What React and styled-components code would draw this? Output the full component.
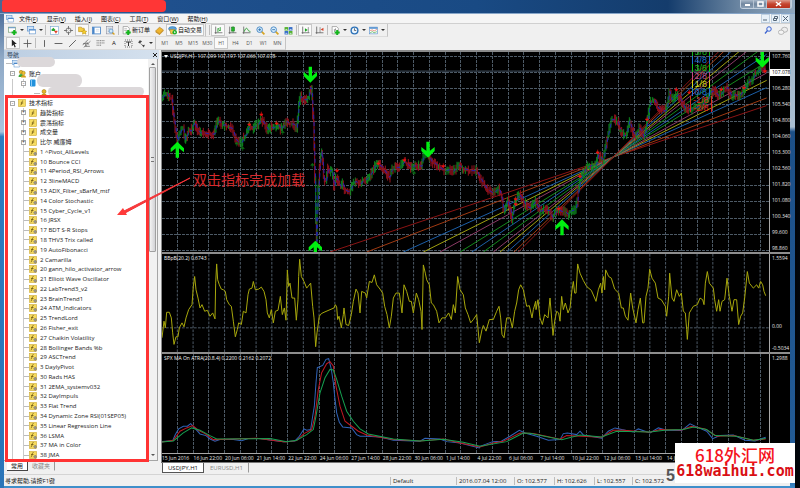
import React, { useState } from 'react';
import styled, { createGlobalStyle } from 'styled-components';

const GlobalStyle = createGlobalStyle`
  * { box-sizing: border-box; }
  html, body { margin: 0; padding: 0; background: #000; }
  body, button {
    font-family: "Open Sans", "Noto Sans CJK SC", sans-serif;
    font-size: 6px;
    line-height: 8px;
    color: #1a1a1a;
  }
  button { border: 0; padding: 0; margin: 0; background: none; }
  ul { list-style: none; margin: 0; padding: 0; }
`;

const Desktop = styled.div`
  height: 100vh;
  min-height: 440px;
  padding-right: 5px;
  background: linear-gradient(90deg, #000 98%, #02060c);
  overflow: hidden;
`;

const Window = styled.div`
  position: relative;
  height: 100%;
  display: grid;
  grid-template-rows: 14px auto 1fr auto;
  padding: 0 5px 2px 4px;
  background:
    linear-gradient(180deg, #9fb6cc, #a9bed3 26%, #1c4f88 27%, #235c98 97%, #3c8bc9) right / 5px 100% no-repeat,
    linear-gradient(180deg, #3b5f8f, #8fa9c6 12%, #a9c4de 27%, #2f7cc0 28%, #2b75b8) left / 4px 100% no-repeat,
    #3f8fca;
`;

const TitleBar = styled.header`
  position: relative;
  display: flex;
  justify-content: flex-end;
  margin: 0 -5px 0 -4px;
  background: linear-gradient(90deg, #4d6794, #1f508d 21%, #194a84 60%, #143c6c 84%, #6b86a2 93%, #90a7be);
  border-bottom: 1px solid #86a5c8;
`;

const TitleMask = styled.div`
  position: absolute;
  left: 2px;
  top: 0;
  width: 164px;
  height: 12px;
  border-radius: 2px 4px 4px 2px;
  background: #ff3636;
`;

const CaptionButtons = styled.div`
  display: flex;
  height: 9px;
  margin-right: 3px;
  border: 1px solid #c2cfdd;
  border-top: 0;
  border-radius: 0 0 3px 3px;
  overflow: hidden;
`;

const CaptionButton = styled.button`
  display: flex;
  align-items: center;
  justify-content: center;
  width: ${props => (props.$close ? '24px' : '13px')};
  border-right: 1px solid #b5c3d2;
  background: ${props => (props.$close
    ? 'linear-gradient(#dd9a8c, #c5452f 50%, #b8301c)'
    : 'linear-gradient(#a9b9ca, #71879f 50%, #8ba0b6)')};
`;

const Chrome = styled.div`
  background: #f0f0f0;
`;

const MenuBar = styled.nav`
  display: flex;
  align-items: center;
  height: 10px;
  padding-left: 2px;
  border-bottom: 1px solid #d0d0d0;
  background: #f5f5f5;
`;

const MenuItem = styled.button`
  margin-left: 1px;
  padding: 0 4px;
  white-space: nowrap;
  color: #111;
  u { text-underline-offset: 1px; }
`;

const MdiButtons = styled.div`
  display: flex;
  gap: 1px;
  margin-left: auto;
`;

const MdiButton = styled.button`
  display: flex;
  align-items: center;
  justify-content: center;
  width: 9px;
  height: 9px;
  border: 1px solid #bfd0e0;
  background: #e8f1f9;
`;

const ToolRow = styled.div`
  display: flex;
  align-items: center;
  height: 13px;
`;

const ToolGroup = styled.div`
  display: flex;
  align-items: center;
  height: 13px;
  padding: 0 1px 0 2px;
  border-right: 1px solid #c4c4c4;
  border-bottom: 1px solid #dcdcdc;
`;

const Tool = styled.button`
  display: flex;
  align-items: center;
  justify-content: center;
  gap: 1px;
  min-width: ${props => (props.$menu ? '19px' : '14px')};
  height: 12px;
  padding: 0 ${props => (props.$menu ? '0' : '1px')};
  white-space: nowrap;
  color: ${props => (props.$muted ? '#555' : '#111')};
  font-size: ${props => (props.$muted ? '5px' : '6px')};
  border: 1px solid ${props => (props.$pressed ? '#c8c8c8' : 'transparent')};
  background: ${props => (props.$pressed ? '#fafafa' : 'transparent')};
`;

const Sep = styled.span`
  width: 1px;
  height: 10px;
  margin: 0 1px;
  background: #bdbdbd;
`;

const Caret = styled.span`
  width: 0;
  height: 0;
  margin-left: 2px;
  border: 2px solid transparent;
  border-top-color: #333;
  border-bottom: 0;
`;

const ToolEnd = styled.div`
  display: flex;
  gap: 6px;
  margin-left: auto;
  padding-right: 2px;
`;

const Workspace = styled.main`
  position: relative;
  display: flex;
  min-height: 0;
  background: #f0f0f0;
`;

const NavPanel = styled.aside`
  position: relative;
  display: flex;
  flex-direction: column;
  flex: 0 0 155px;
  min-height: 0;
`;

const NavHeader = styled.div`
  display: flex;
  align-items: center;
  justify-content: space-between;
  height: 9px;
  padding: 0 2px 0 3px;
  background: linear-gradient(90deg, #bccee2, #d5e1ee);
  color: #2d4056;
`;

const NavBody = styled.div`
  display: flex;
  flex: 1;
  min-height: 0;
  margin-right: 1px;
  background: #fff;
  border: solid #a5a5a5;
  border-width: 0 1px 1px 0;
`;

const Tree = styled.ul`
  display: flex;
  flex-direction: column;
  flex: 1;
  min-width: 0;
  overflow: hidden;
`;

const TreeRow = styled.li`
  position: relative;
  display: flex;
  flex: 1 1 0;
  align-items: center;
  min-height: 0;
  padding-left: ${props => [0, 6, 17, 28][props.$level]}px;
  white-space: nowrap;

  &::before {
    content: "";
    position: absolute;
    top: 0;
    bottom: 0;
    left: 8px;
    border-left: ${props => (props.$level > 1 ? '1px solid #c9c9c9' : '0')};
  }

  &::after {
    content: "";
    position: absolute;
    top: 0;
    bottom: 0;
    left: 19px;
    border-left: ${props => (props.$level === 2 ? '1px solid #c9c9c9' : '0')};
  }
`;

const Branch = styled.span`
  width: 6px;
  height: 1px;
  margin-left: 2px;
  background: #bbb;
`;

const Toggle = styled.button`
  position: relative;
  z-index: 1;
  display: flex;
  align-items: center;
  justify-content: center;
  width: 5px;
  height: 5px;
  margin-right: 3px;
  border: 1px solid #a8a8a8;
  background: #fff;
  font-size: 5px;
  line-height: 3px;
  color: #333;
`;

const TreeLabel = styled.span`
  margin-left: 3px;
  color: #222;
`;

const Smudge = styled.div`
  position: absolute;
  left: ${props => props.$x}px;
  top: ${props => props.$y}px;
  width: ${props => props.$w}px;
  height: ${props => props.$h}px;
  border-radius: 6px;
  background: #dcd8da;
`;

const ScrollBar = styled.div`
  display: flex;
  flex-direction: column;
  align-items: center;
  justify-content: space-between;
  width: 9px;
  padding: 2px 0;
  background: #f1f1f1;
`;

const ScrollArrow = styled.button`
  width: 4px;
  height: 4px;
  border: 2px solid transparent;
  border-${props => (props.$up ? 'bottom' : 'top')}-color: #555;
`;

const ScrollTrack = styled.div`
  flex: 1;
  width: 7px;
  padding: 2px 0;
`;

const ScrollThumb = styled.div`
  display: flex;
  align-items: center;
  justify-content: center;
  height: 48%;
  border: 1px solid #a0a0a0;
  border-radius: 1px;
  background: linear-gradient(90deg, #f2f2f2, #d2d2d5);
  &::after {
    content: "";
    width: 3px;
    height: 3px;
    border: solid #777;
    border-width: 1px 0;
  }
`;

const NavTabs = styled.div`
  display: flex;
  align-items: stretch;
  height: 13px;
  padding: 0 0 3px 3px;
`;

const NavTab = styled.button`
  padding: 0 4px;
  color: ${props => (props.$active ? '#111' : '#888')};
  background: ${props => (props.$active ? '#fff' : 'transparent')};
  border-right: 1px solid ${props => (props.$active ? '#444' : '#999')};
  border-bottom: 1px solid ${props => (props.$active ? '#444' : 'transparent')};
`;

const Highlight = styled.div`
  position: absolute;
  left: 1px;
  top: 45px;
  bottom: 12px;
  width: 144px;
  border: 3px solid #ff3333;
`;

const ChartColumn = styled.section`
  display: flex;
  flex-direction: column;
  flex: 1;
  min-width: 0;
  padding-left: 2px;
`;

const ChartWindow = styled.div`
  flex: 1;
  min-height: 0;
  display: grid;
  grid-template-rows: 200fr 100fr 101fr 9px;
  border: solid #8a8a8a;
  border-width: 2px 0 0 1px;
  background: #000;
`;

const Pane = styled.div`
  display: grid;
  grid-template-columns: 1fr 21px;
  min-height: 0;
  border-top: ${props => (props.$first ? '0' : '2px solid #8e8e8e')};
`;

const Plot = styled.div`
  position: relative;
  min-width: 0;
  min-height: 0;
  overflow: hidden;
`;

const PlotSvg = styled.svg`
  display: block;
  position: absolute;
  inset: 0;
  width: 100%;
  height: 100%;
`;

const PlotTitle = styled.div`
  position: absolute;
  top: 1px;
  left: 2px;
  display: flex;
  align-items: center;
  gap: 2px;
  font: 5px/7px "Open Sans", sans-serif;
  color: #f4f4f4;
  white-space: pre;
`;

const TitleCaret = styled.span`
  border: 2px solid transparent;
  border-top: 3px solid #fff;
  border-bottom: 0;
`;

const LevelStack = styled.div`
  position: absolute;
  top: -4px;
  left: 87%;
  display: flex;
  flex-direction: column;
  align-items: center;
`;

const Level = styled.span`
  padding: 0 2px;
  border: solid ${props => props.$color};
  border-width: 0 1px;
  color: ${props => props.$color};
  font: 9px/8px "Liberation Sans", sans-serif;
`;

const Axis = styled.div`
  display: flex;
  flex-direction: column;
  justify-content: space-between;
  padding: 1px 0 0;
  border-left: 1px solid #a8a8a8;
  min-height: 0;
`;

const AxisLabel = styled.span`
  display: block;
  padding-left: 2px;
  font: 5px/7px "Open Sans", sans-serif;
  color: ${props => (props.$current ? '#000' : '#e6e6e6')};
  background: ${props => (props.$current ? '#fff' : 'transparent')};
`;

const AxisGap = styled.span`
  flex: ${props => props.$grow};
`;

const TimeAxis = styled.div`
  display: flex;
  margin-right: 20px;
  overflow: hidden;
  border-top: 1px solid #a8a8a8;
`;

const TimeLabel = styled.span`
  flex: 0 0 calc(100% * 63 / 1214);
  font: 5px/8px "Open Sans", sans-serif;
  white-space: nowrap;
  color: #e6e6e6;
`;

const ChartTabs = styled.div`
  display: flex;
  align-items: flex-start;
  height: 12px;
  padding-left: 1px;
  border-top: 1px solid #777;
`;

const ChartTab = styled.button`
  height: 10px;
  padding: 0 5px;
  border: solid ${props => (props.$active ? '#555' : 'transparent')};
  border-width: 0 1px 1px;
  border-right-color: ${props => (props.$active ? '#555' : '#999')};
  color: ${props => (props.$active ? '#111' : '#888')};
  background: ${props => (props.$active ? '#fff' : 'transparent')};
`;

const PointerSvg = styled.svg`
  position: absolute;
  left: 112px;
  top: 125px;
  width: 76px;
  height: 44px;
`;

const Note = styled.div`
  position: absolute;
  left: 189px;
  top: 119px;
  font: 14px/20px "Noto Sans CJK SC", sans-serif;
  color: #d82a2c;
  white-space: nowrap;
`;

const StatusBar = styled.footer`
  display: flex;
  align-items: center;
  height: 12px;
  padding-left: 1px;
  border-top: 1px solid #d4d4d4;
  background: #f0f0f0;
`;

const StatusHelp = styled.span`
  flex: 1;
`;

const StatusCell = styled.span`
  flex: 0 0 ${props => props.$width}px;
  padding-left: 2px;
  border-left: 1px solid #bdbdbd;
  white-space: nowrap;
`;

const Watermark = styled.div`
  position: absolute;
  right: 0;
  bottom: 5px;
  display: flex;
  flex-direction: column;
  align-items: center;
  justify-content: center;
  width: 120px;
  height: 40px;
  background: #fff;
  overflow: hidden;
`;

const WatermarkName = styled.span`
  font: 500 17px/17px "Noto Sans CJK SC", sans-serif;
  color: #f5121c;
`;

const WatermarkLink = styled.a`
  font: 700 15px/17px "DejaVu Sans Mono", monospace;
  color: #d90f14;
  text-decoration: none;
`;

const PageNumber = styled.span`
  position: absolute;
  right: 120px;
  bottom: 3px;
  font: 700 16px/18px "Liberation Sans", sans-serif;
  color: #555;
`;

// plots are drawn at three units per pixel
const GRID_X = Array.from({ length: 38 }, (_, i) => 52 + i * 47.25);
const GRID_Y = Array.from({ length: 13 }, (_, i) => 25 + i * 48.5);

const parse = str => str.trim().split(/\s+/).map(p => p.split(',').map(Number));

const PRICE = parse(`
  8,150 16,140 22,135 30,150 38,155 42,200 48,240 54,280 60,260 66,245 72,240 77,275 82,265 88,245 94,250
  100,235 106,222 112,240 118,250 124,255 136,255 148,258 165,258 172,225 180,220 188,232 196,230 206,238
  216,240 222,250 228,272 234,280 240,285 248,282 254,265 260,262 266,240 272,235 280,240 288,232 296,230
  304,215 312,222 318,232 326,245 334,238 342,240 350,235 358,232 364,245 372,235 382,220 390,228 402,228
  412,240 416,200 418,165 424,145 430,155 440,155 448,150 452,118 456,125 458,150 462,220 464,300 467,400
  469,520 471,580 474,480 478,400 482,340 487,310 490,345 494,400 500,400 506,360 512,370 518,365 524,415
  530,390 536,400 544,415 550,405 556,425 564,430 572,430 580,410 588,400 596,405 604,408 612,395 620,395
  630,385 638,372 646,355 658,350 670,358 680,375 690,388 696,368 706,358 720,358 728,350 736,340 746,350
  756,360 766,352 776,352 786,355 792,325 802,318 810,325 818,345 826,345 836,355 846,362 858,368 870,365
  882,370 898,352 910,360 930,368 952,368 960,385 974,410 984,425 1002,436 1018,420 1026,445 1034,490
  1046,455 1052,480 1058,512 1066,470 1078,438 1090,455 1100,475 1114,480 1128,460 1142,490 1154,485
  1170,488 1180,510 1190,490 1196,485 1206,490 1218,492 1226,500 1236,488 1248,485 1254,460 1258,420
  1266,385 1276,370 1280,360 1296,352 1310,350 1316,320 1324,330 1332,335 1338,300 1344,270 1350,240
  1356,215 1364,215 1376,222 1382,245 1394,265 1402,255 1410,218 1418,245 1428,265 1440,240 1454,268
  1462,235 1468,195 1472,165 1484,155 1496,180 1506,185 1518,190 1524,170 1530,130 1536,155 1544,150
  1556,140 1564,155 1576,180 1590,185 1606,180 1620,175 1640,160 1656,130 1666,130 1678,145 1692,130
  1704,118 1716,145 1726,140 1740,145 1750,130 1764,105 1780,92 1792,75 1806,60 1816,65
`);

const BB = `
  6,265 12,215 16,235 20,188 28,188 34,205 38,250 42,285 48,262 54,262 58,235 66,220 72,232 78,205 86,180
  96,165 100,110 104,80 108,120 114,145 120,175 126,165 134,185 142,182 150,200 158,190 165,208 167,100
  170,42 173,90 178,105 184,118 190,120 196,125 200,150 208,165 214,170 220,215 226,262 232,240 236,220
  244,225 250,185 258,190 264,135 268,118 276,115 280,95 286,120 296,118 304,112 312,125 318,150 322,190
  328,205 334,180 340,220 346,185 354,182 361,140 367,195 373,175 378,212 382,60 386,110 390,100 396,145
  404,145 409,212 414,150 416,80 419,28 424,80 432,95 440,115 452,100 458,170 462,205 467,292 471,250
  478,200 484,192 492,188 522,175 526,165 530,172 533,210 537,200 544,235 550,195 552,175 558,225 566,228
  574,195 580,155 588,118 594,130 600,190 605,125 616,130 620,145 628,95 636,98 643,75 650,105 660,118
  668,130 674,170 681,195 688,235 694,200 700,145 708,130 718,130 726,190 732,105 740,125 748,155 754,155
  760,190 769,130 776,150 783,185 786,240 790,45 796,70 800,90 808,105 814,160 820,165 830,185 837,220
  846,205 856,205 866,190 874,210 880,165 886,190 893,80 900,120 910,135 916,175 924,195 932,220 940,210
  950,195 958,280 966,240 970,228 978,245 988,210 1000,210 1010,185 1017,170 1022,205 1026,255 1032,265
  1040,205 1050,205 1057,235 1064,185 1070,160 1076,120 1082,105 1090,120 1100,170 1108,168 1116,205
  1120,180 1127,155 1128,180 1134,150 1140,205 1147,225 1154,195 1164,205 1170,145 1176,220 1179,258
  1184,215 1190,185 1196,190 1200,215 1205,140 1210,180 1216,160 1224,190 1230,175 1236,120 1240,95
  1244,130 1248,130 1253,42 1260,70 1270,92 1280,110 1294,122 1304,145 1308,155 1315,120 1322,100 1326,130
  1330,80 1334,120 1337,60 1346,80 1354,85 1364,118 1376,130 1384,175 1390,175 1396,200 1404,212 1412,130
  1418,175 1428,220 1434,180 1441,145 1448,220 1452,220 1458,140 1464,115 1469,58 1476,85 1486,100
  1494,145 1504,150 1516,170 1520,200 1526,140 1529,70 1536,145 1542,155 1550,120 1558,140 1564,130
  1570,185 1576,190 1580,240 1582,270 1588,190 1594,180 1600,170 1612,165 1620,145 1628,150 1632,165
  1636,100 1642,65 1648,100 1660,115 1664,150 1670,185 1676,150 1680,185 1686,155 1694,150 1701,85
  1708,140 1716,185 1722,150 1730,150 1736,225 1742,200 1748,190 1754,145 1762,65 1768,100 1780,115
  1790,105 1796,115 1802,95 1808,105 1812,125 1817,138
`;

const ATR = [
  ['#2f63b8', `6,576 38,573 46,555 56,538 70,530 82,530 92,522 104,535 120,553 138,558 150,568 165,575 180,570
    220,570 245,573 265,567 300,567 330,571 370,576 405,574 418,560 432,538 440,542 452,540 458,500 463,470
    468,400 472,355 488,348 498,330 506,328 514,360 520,400 524,440 530,490 538,518 548,532 575,535 590,555
    600,560 620,560 660,562 700,572 740,573 780,575 795,566 840,568 860,576 900,580 958,595 960,590 998,576
    1024,575 1050,560 1078,542 1095,550 1130,560 1165,572 1200,570 1210,552 1222,550 1250,555 1260,545
    1270,556 1325,566 1345,545 1365,535 1385,540 1420,547 1435,538 1470,550 1495,535 1520,542 1565,543
    1590,523 1610,532 1640,545 1658,567 1680,558 1720,556 1755,572 1785,574 1817,563`],
  ['#c01822', `6,577 40,572 60,545 80,535 98,528 115,542 135,552 160,570 200,569 290,566 375,577 410,573 432,552
    455,540 465,500 475,420 485,370 500,343 510,337 520,350 528,410 540,470 555,515 575,530 595,545 620,556
    700,570 780,574 850,568 900,580 960,592 1000,580 1030,575 1080,550 1120,552 1200,569 1220,558 1325,563
    1360,542 1390,542 1470,548 1500,540 1565,541 1595,530 1635,538 1670,560 1720,558 1780,572 1817,568`],
  ['#16a050', `6,577 40,574 70,550 95,535 120,542 150,558 170,568 330,567 380,576 410,572 440,555 460,540
    468,500 480,430 495,385 510,360 520,362 530,390 545,440 560,485 580,515 600,538 625,553 700,568 780,574
    850,569 910,578 960,590 1040,576 1090,550 1110,551 1205,570 1260,556 1325,562 1370,545 1470,547 1520,541
    1570,540 1600,532 1640,540 1665,558 1730,560 1780,572 1817,567`],
];

const FAN = [
  [510, '#8c1414'], [620, '#a03a12'], [730, '#1c5fa8'], [790, '#a0a010'], [840, '#8c3a66'],
  [900, '#148a1c'], [935, '#1c5fa8'], [970, '#148a1c'], [1000, '#8c3a66'], [1020, '#a0a010'],
  [1042, '#1c5fa8'], [1062, '#a03a12'], [1075, '#8c1414'],
];

const SELL = parse(`268,228 304,198 350,225 531,367 655,345 733,335 850,353 1067,452 1067,467 1196,481 1260,384
  1313,312 1461,213 1549,124 1588,132 1684,123 1752,118 1815,68`);
const BUY = parse('230,288 248,302 325,252 368,254 457,352 762,376 1382,250 1142,498');

const ARROWS = [
  [451, 80, 1], [804, 305, 1], [1807, 35, 1], [52, 305, -1], [466, 602, -1], [1206, 538, -1],
];

// one candle per three units along the price path
const buildCandles = () => {
  const out = [];
  let seed = 7;
  const rand = () => {
    seed = (seed * 1103515245 + 12345) % 2147483648;
    return seed / 2147483648;
  };
  for (let i = 0; i < PRICE.length - 1; i += 1) {
    const [x1, y1] = PRICE[i];
    const [x2, y2] = PRICE[i + 1];
    for (let x = x1; x < x2; x += 3) {
      const a = y1 + ((y2 - y1) * (x - x1)) / (x2 - x1);
      const b = y1 + ((y2 - y1) * (Math.min(x + 3, x2) - x1)) / (x2 - x1);
      const up = b < a ? rand() > 0.1 : rand() > 0.9;
      out.push({ x, top: Math.min(a, b) - 2 - rand() * 15, bottom: Math.max(a, b) + 2 + rand() * 15, up });
    }
  }
  return out;
};
const CANDLES = buildCandles();

const Grid = ({ top, bottom, rows = [] }) => (
  <g stroke="#4d5a66" strokeWidth="3" strokeDasharray="8 4" shapeRendering="crispEdges">
    {GRID_X.map(x => <line key={x} x1={x} x2={x} y1={top} y2={bottom} />)}
    {rows.map(y => <line key={y} x1="6" x2="1827" y1={y} y2={y} />)}
  </g>
);

const LEVELS = [
  ['5/8', '#12b51a'], ['4/8', '#1e72d2'], ['3/8', '#12c41a'], ['2/8', '#c04a86'], ['1/8', '#d8d818'],
  ['0/8', '#1e72d2'], ['-1/8', '#d8321a'], ['-2/8', '#e01c1c'],
];

const PRICES = ['107.760', '107.078', '106.280', '105.540', '104.800', '104.060', '103.300', '102.560',
  '101.820', '101.080', '100.340', '99.600', '98.860'];

const TIMES = ['15 Jun 2016', '16 Jun 22:00', '20 Jun 06:00', '21 Jun 14:00', '22 Jun 22:00', '24 Jun 06:00',
  '27 Jun 14:00', '28 Jun 22:00', '30 Jun 06:00', '1 Jul 14:00', '4 Jul 22:00', '6 Jul 06:00', '7 Jul 14:00',
  '10 Jul 22:00', '12 Jul 06:00', '13 Jul 14:00', '14 Jul 22:00'];

const INDICATORS = ['1 ^Pivot_AllLevels', '10 Bounce CCI', '11 4Period_RSI_Arrows', '12 3lineMACD',
  '13 ADX_Filter_sBarM_mtf', '14 Color Stochastic', '15 Cyber_Cycle_v1', '16 JRSX', '17 BDT S-R Stops',
  '18 THV3 Trix called', '19 AutoFibonacci', '2 Camarilla', '20 gann_hilo_activator_arrow',
  '21 Elliott Wave Oscillator', '22 LabTrend3_v2', '23 BrainTrend1', '24 ATM_Indicators', '25 TrendLord',
  '26 Fisher_exit', '27 Chaikin Volatility', '28 Bollinger Bands %b', '29 ASCTrend', '3 DaylyPivot',
  '30 Rads HAS', '31 2EMA_systemv032', '32 DayImpuls', '33 Flat Trend', '34 Dynamic Zone RSI(01SEP05)',
  '35 Linear Regression Line', '36 LSMA', '37 MA in Color', '38 JMA'];

const TREE = [
  { level: 0, icon: 'windows', label: '' },
  { level: 1, icon: 'accounts', label: '账户', toggle: '-' },
  { level: 2, icon: 'server', label: '', toggle: '-' },
  { level: 3, icon: 'user', label: '' },
  { level: 1, icon: 'func', label: '技术指标', toggle: '-' },
  { level: 2, icon: 'func', label: '趋势指标', toggle: '+' },
  { level: 2, icon: 'func', label: '震荡指标', toggle: '+' },
  { level: 2, icon: 'func', label: '成交量', toggle: '+' },
  { level: 2, icon: 'func', label: '比尔 威廉姆', toggle: '+' },
  ...INDICATORS.map(label => ({ level: 2, icon: 'custom', label })),
];

const MENUS = [['文件', 'F'], ['显示', 'V'], ['插入', 'I'], ['图表', 'C'], ['工具', 'T'], ['窗口', 'W'], ['帮助', 'H']];

const FRAMES = ['M1', 'M5', 'M15', 'M30', 'H1', 'H4', 'D1', 'W1', 'MN'];

const plus = <path d="M11 7v9M6.500 11.500h9" stroke="#14b51c" strokeWidth="3.500" />;
const page = <path d="M2 1h8l3 3v10H2z" fill="#fff" stroke="#777" />;
const lens = <><path d="M10 10l5 5" stroke="#d8a422" strokeWidth="3" /><circle cx="6.500" cy="6.500" r="5" fill="#d7ecfb" stroke="#3b7fc0" strokeWidth="1.500" /></>;
const axes = <path d="M3 1v13M1 12h14" stroke="#555" strokeWidth="1.300" />;

const GLYPHS = {
  windows: <><rect x="1" y="1" width="11" height="8" fill="#cfe3f7" stroke="#4a86c8" /><rect x="4" y="6" width="11" height="8" fill="#fff" stroke="#4a86c8" /><path d="M4 7h11" stroke="#4a86c8" strokeWidth="2" /></>,
  newChart: <><rect x="1" y="2" width="12" height="9" fill="#fff" stroke="#5a8a5a" /><path d="M1 3h12" stroke="#6d9bc8" strokeWidth="2" />{plus}</>,
  market: <><rect x="1" y="1" width="14" height="14" fill="#fff" stroke="#6da0d0" /><path d="M3 6l3-3 3 3v3H3z" fill="#25a52c" /><path d="M8 9h5l-2.500 4z" fill="#e0402a" stroke="#e0402a" /></>,
  target: <><circle cx="8" cy="8" r="4.500" fill="none" stroke="#666" strokeWidth="1.500" /><path d="M8 0v6M8 10v6M0 8h6M10 8h6" stroke="#666" strokeWidth="1.500" /></>,
  folder: <><path d="M1 2h5l1 2h4v6H1z" fill="#f5cf45" stroke="#b98d14" /><path d="M11 6l1.500 3 3 .5-2 2 .5 3-3-1.500-3 1.500.5-3-2-2 3-.5z" fill="#f8d22c" stroke="#b98d14" /></>,
  terminal: <><rect x="1" y="2" width="14" height="12" fill="#fff" stroke="#4a86c8" strokeWidth="1.500" /><path d="M3 2v12" stroke="#4a86c8" strokeWidth="3" /><path d="M7 6h6M7 9h6" stroke="#bcd" /></>,
  tester: <><rect x="1" y="1" width="11" height="13" fill="#e9eef4" stroke="#889" /><path d="M3 4h7M3 7h4M3 10h4" stroke="#89a" /><path d="M11 11l4 4" stroke="#d8a422" strokeWidth="2.500" /><circle cx="9" cy="9" r="3.500" fill="#cfe8fb" stroke="#3b7fc0" /></>,
  order: <>{page}<path d="M4 5h5M4 8h5" stroke="#888" />{plus}</>,
  book: <><path d="M1 9l7-7 7 5-7 7z" fill="#f0b52e" stroke="#a97814" /><path d="M1 9v2l7 5v-2zM8 16l7-7V7l-7 7z" fill="#c88d1c" /></>,
  auto: <><ellipse cx="8" cy="5" rx="7" ry="4" fill="#5aa2dd" stroke="#2d72b0" /><path d="M3 6h9l-1 8H5z" fill="#f1c84a" stroke="#a98318" /><circle cx="12" cy="11" r="4" fill="#1fae2a" /><path d="M11 9l3 2-3 2z" fill="#fff" /></>,
  bars: <>{axes}<path d="M7 4v7M7 5h2M11 2v7M9 8h2" stroke="#1b9a22" strokeWidth="1.500" /></>,
  candles: <>{axes}<path d="M9 0v12" stroke="#187a1c" /><rect x="6.500" y="2" width="5" height="7" fill="#22b52a" stroke="#187a1c" /></>,
  line: <>{axes}<path d="M4 10C6 3 9 3 10 6s3 3 5 4" fill="none" stroke="#1b9a22" strokeWidth="1.500" /></>,
  zoomIn: <>{lens}<path d="M4 6.500h5M6.500 4v5" stroke="#2b6fb0" strokeWidth="1.500" /></>,
  zoomOut: <>{lens}<path d="M4 6.500h5" stroke="#2b6fb0" strokeWidth="1.500" /></>,
  tile: <><rect x="1" y="2" width="6.500" height="6" fill="#4cae22" /><rect x="8.500" y="2" width="6.500" height="6" fill="#2c66c4" /><rect x="1" y="9" width="6.500" height="6" fill="#2c66c4" /><rect x="8.500" y="9" width="6.500" height="6" fill="#4cae22" /><path d="M2.500 6h3.500M10 6h3.500M2.500 13h3.500M10 13h3.500" stroke="#e8f2ff" strokeWidth="1.500" /></>,
  scroll: <>{axes}<path d="M13 2v10" stroke="#555" /><path d="M7 4l5 3-5 3z" fill="#1ba524" /></>,
  shift: <>{axes}<path d="M9 2v10" stroke="#555" /><path d="M15 3v6l-5-3z" fill="#d8432a" /></>,
  indicator: <>{page}<path d="M5 11c2 0 2-7 4-7M5 7h4" fill="none" stroke="#555" />{plus}</>,
  clock: <><circle cx="8" cy="8" r="6" fill="#e8f3fd" stroke="#2d72b8" strokeWidth="2.500" /><path d="M8 4v4h3" fill="none" stroke="#444" strokeWidth="1.300" /></>,
  template: <><rect x="1" y="2" width="14" height="12" fill="#fff" stroke="#4a86c8" /><path d="M1 3.500h14" stroke="#5a94d0" strokeWidth="3" /><path d="M2 8l4-1 3 2 5-3" fill="none" stroke="#d8432a" /><path d="M2 12l4-2 3 2 5-2" fill="none" stroke="#1b9a22" /></>,
  cursor: <path d="M5 1v12l3-3 2 5 2-1-2-5h4z" fill="#222" />,
  cross: <path d="M8 1v14M1 8h14" stroke="#555" strokeWidth="1.500" />,
  vline: <path d="M8 2v12" stroke="#555" strokeWidth="1.600" />,
  hline: <path d="M1 8h14" stroke="#555" strokeWidth="1.600" />,
  trend: <path d="M2 14L14 2" stroke="#555" strokeWidth="1.600" />,
  channel: <path d="M1 11L11 1M3 15L15 4M2 8h9M5 13h9M5 8l3 5M8 5l4 5" stroke="#666" strokeWidth="1.300" />,
  fibo: <path d="M1 3h14M1 7h14M1 11h9" stroke="#666" strokeDasharray="2 1" strokeWidth="1.500" />,
  shapes: <><path d="M2 6l3-4 4 2-4 4z" fill="#444" /><path d="M6 8l5 4" stroke="#777" strokeWidth="1.500" /><path d="M9 11l5-1-2 5z" fill="#444" /></>,
  search: <><circle cx="10" cy="6" r="4.500" fill="#eaf2ff" stroke="#3a62d0" strokeWidth="2" /><path d="M7 9l-5 6" stroke="#3a62d0" strokeWidth="2.500" /></>,
  chat: <><ellipse cx="10.500" cy="6" rx="5" ry="4" fill="#eee" stroke="#999" /><ellipse cx="5" cy="10" rx="4.500" ry="3.500" fill="#f5f5f5" stroke="#999" /></>,
  accounts: <><circle cx="6" cy="4" r="3.500" fill="#e8b92a" stroke="#90700c" /><path d="M1 14c0-8 10-8 10 0z" fill="#3ba638" /><circle cx="11" cy="6" r="3.500" fill="#f0c22e" stroke="#90700c" /><path d="M6 15c0-7 10-7 10 0z" fill="#d5a01a" /></>,
  server: <><rect x="2" y="1" width="11" height="14" rx="2" fill="#2191dc" /><path d="M5 2v12" stroke="#a9dbff" strokeWidth="1.500" /></>,
  user: <><circle cx="8" cy="5" r="4" fill="#e9b62a" stroke="#90700c" /><path d="M2 15c0-8 12-8 12 0z" fill="#c99b1a" /></>,
  func: <><rect x="1" y="1" width="14" height="14" fill="#f7dd63" stroke="#c49b1c" /><path d="M10.500 4C8 3.500 8 5 7.500 8S6.500 12.500 5 12M5.500 8h5" fill="none" stroke="#6b5410" strokeWidth="1.500" /></>,
  custom: <><rect x="1" y="1" width="14" height="14" fill="#f5da5c" stroke="#c49b1c" /><path d="M9 3C6.500 3 7 5 6 8s-1 4-2.500 4M4 7h5" fill="none" stroke="#6b5410" strokeWidth="1.500" /><path d="M12.500 8l3.500 3.500-3.500 3.500L9 11.500z" fill="#9b9484" stroke="#777" /></>,
};

const Icon = ({ name, size = 9 }) => (
  <svg width={size} height={size} viewBox="0 0 16 16" fill="none" aria-hidden="true">{GLYPHS[name]}</svg>
);

const ToolIcon = ({ name, menu, pressed, children }) => (
  <Tool $menu={menu} $pressed={pressed} aria-label={name}>
    <Icon name={name} />
    {children}
    {menu && <Caret />}
  </Tool>
);

const PricePane = () => (
  <Pane $first>
    <Plot>
      <PlotSvg viewBox="6 12 1821 600" preserveAspectRatio="none">
        <Grid top={12} bottom={612} rows={GRID_Y} />
        <rect x="6" y="67" width="1821" height="5" fill="#27303a" />
        {FAN.map(([x, color]) => (
          <line
            key={x}
            x1={x}
            y1="612"
            x2="1820"
            y2={327 - (285 * 460) / (1360 - x)}
            stroke={color}
            strokeWidth="3"
          />
        ))}
        {CANDLES.map((c, i) => (
          <line key={i} x1={c.x} x2={c.x} y1={c.top} y2={c.bottom} stroke={c.up ? '#0e8a20' : '#98121e'} strokeWidth="3" />
        ))}
        <polyline points={PRICE.join(' ')} fill="none" stroke="#2222b4" strokeWidth="3" strokeDasharray="12 10" />
        {SELL.map(([x, y]) => (
          <path key={`${x}-${y}`} d={`M${x} ${y - 7}v10M${x - 5} ${y}h10l-5 6z`} stroke="#f01010" fill="#f01010" strokeWidth="2" />
        ))}
        {BUY.map(([x, y]) => (
          <path key={`${x}-${y}`} d={`M${x} ${y + 7}v-10M${x - 5} ${y}h10l-5 -6z`} stroke="#0c6a14" fill="#0c6a14" strokeWidth="2" />
        ))}
        {ARROWS.map(([x, y, dir]) => (
          <path
            key={`${x}-${y}`}
            d="M-5-24H5V4L20-8V4L0 24L-20 4V-8L-5 4Z"
            transform={`translate(${x} ${y}) scale(1 ${dir})`}
            fill="#00f010"
          />
        ))}
      </PlotSvg>
      <LevelStack>
        {LEVELS.map(([text, color]) => <Level key={text} $color={color}>{text}</Level>)}
      </LevelStack>
      <PlotTitle><TitleCaret />USDJPY,H1  107.099 107.197 107.066 107.078</PlotTitle>
    </Plot>
    <Axis>
      {PRICES.map((p, i) => <AxisLabel key={p} $current={i === 1}>{p}</AxisLabel>)}
    </Axis>
  </Pane>
);

const App = () => {
  const [navTab, setNavTab] = useState('常用');
  const [chartTab, setChartTab] = useState('USDJPY,H1');
  const [frame, setFrame] = useState('H1');

  return (
    <Desktop>
      <GlobalStyle />
      <Window>
        <TitleBar>
          <TitleMask />
          <CaptionButtons>
            <CaptionButton aria-label="minimize"><svg width="7" height="6"><path d="M1 4h5" stroke="#fff" strokeWidth="2" /></svg></CaptionButton>
            <CaptionButton aria-label="maximize"><svg width="7" height="6"><rect x="1" y="1" width="5" height="4" fill="none" stroke="#fff" strokeWidth="1.500" /></svg></CaptionButton>
            <CaptionButton $close aria-label="close"><svg width="7" height="6"><path d="M1 1l5 4M6 1L1 5" stroke="#fff" strokeWidth="1.500" /></svg></CaptionButton>
          </CaptionButtons>
        </TitleBar>

        <Chrome>
          <MenuBar>
            <Icon name="windows" size={8} />
            {MENUS.map(([text, key]) => <MenuItem key={key}>{text}(<u>{key}</u>)</MenuItem>)}
            <MdiButtons>
              <MdiButton aria-label="minimize chart"><svg width="5" height="5"><path d="M0 4h4" stroke="#567" /></svg></MdiButton>
              <MdiButton aria-label="restore chart"><svg width="5" height="5"><path d="M1.500 .5h3v2h-3zM.5 2.500h3v2h-3z" fill="none" stroke="#567" /></svg></MdiButton>
              <MdiButton aria-label="close chart"><svg width="5" height="5"><path d="M0 0l5 5M5 0L0 5" stroke="#567" /></svg></MdiButton>
            </MdiButtons>
          </MenuBar>
          <ToolRow>
            <ToolGroup>
              <ToolIcon name="newChart" menu />
              <ToolIcon name="windows" menu />
              <Sep />
              <ToolIcon name="market" />
              <ToolIcon name="target" />
              <ToolIcon name="folder" pressed />
              <ToolIcon name="terminal" />
              <ToolIcon name="tester" />
              <Sep />
              <ToolIcon name="order">新订单</ToolIcon>
              <ToolIcon name="book" />
              <ToolIcon name="auto" pressed>自动交易</ToolIcon>
            </ToolGroup>
            <ToolGroup>
              <Sep />
              <ToolIcon name="bars" pressed />
              <ToolIcon name="candles" />
              <ToolIcon name="line" />
              <ToolIcon name="zoomIn" />
              <ToolIcon name="zoomOut" />
              <ToolIcon name="tile" />
              <Sep />
              <ToolIcon name="scroll" pressed />
              <ToolIcon name="shift" />
              <Sep />
              <ToolIcon name="indicator" menu />
              <ToolIcon name="clock" menu />
              <ToolIcon name="template" menu />
            </ToolGroup>
            <ToolEnd>
              <Icon name="search" size={8} />
              <Icon name="chat" size={10} />
            </ToolEnd>
          </ToolRow>
          <ToolRow>
            <ToolGroup>
              <ToolIcon name="cursor" pressed />
              <ToolIcon name="cross" />
              <Sep />
              <ToolIcon name="vline" />
              <ToolIcon name="hline" />
              <ToolIcon name="trend" />
              <ToolIcon name="channel" />
              <ToolIcon name="fibo" />
              <Tool>A</Tool>
              <Tool aria-label="text label"><svg width="9" height="9"><rect x="1" y="1" width="7" height="7" fill="none" stroke="#777" strokeDasharray="1 1" /><path d="M2 3h5M4.500 3v4" stroke="#333" /></svg></Tool>
              <ToolIcon name="shapes" menu />
            </ToolGroup>
            <ToolGroup>
              {FRAMES.map(f => (
                <Tool key={f} $muted $pressed={f === frame} onClick={() => setFrame(f)}>{f}</Tool>
              ))}
            </ToolGroup>
          </ToolRow>
        </Chrome>

        <Workspace>
          <NavPanel>
            <NavHeader>
              导航
              <button aria-label="close navigator"><svg width="4" height="4"><path d="M0 0l4 4M4 0L0 4" stroke="#222" /></svg></button>
            </NavHeader>
            <NavBody>
              <Tree>
                {TREE.map((node, i) => (
                  <TreeRow key={i} $level={node.level}>
                    {node.toggle && <Toggle aria-label={node.label || 'server'}>{node.toggle}</Toggle>}
                    {!node.toggle && <Branch />}
                    <Icon name={node.icon} size={8} />
                    <TreeLabel>{node.label}</TreeLabel>
                  </TreeRow>
                ))}
              </Tree>
              <ScrollBar>
                <ScrollArrow $up aria-label="scroll up" />
                <ScrollTrack><ScrollThumb /></ScrollTrack>
                <ScrollArrow aria-label="scroll down" />
              </ScrollBar>
            </NavBody>
            <Smudge $x={13} $y={7} $w={38} $h={10} />
            <Smudge $x={33} $y={24} $w={45} $h={13} />
            <Smudge $x={44} $y={37} $w={96} $h={9} />
            <NavTabs>
              {['常用', '收藏夹'].map(t => (
                <NavTab key={t} $active={t === navTab} onClick={() => setNavTab(t)}>{t}</NavTab>
              ))}
            </NavTabs>
            <Highlight />
          </NavPanel>

          <ChartColumn>
            <ChartWindow>
              <PricePane />
              <Pane>
                <Plot>
                  <PlotSvg viewBox="6 12 1821 296" preserveAspectRatio="none">
                    <Grid top={12} bottom={308} rows={[235]} />
                    <polyline points={BB} fill="none" stroke="#a8a80c" strokeWidth="3" />
                  </PlotSvg>
                  <PlotTitle>BBpB(20.2) 0.6743</PlotTitle>
                </Plot>
                <Axis>
                  <AxisLabel>1.5594</AxisLabel>
                  <AxisGap $grow={4} />
                  <AxisLabel>0.00</AxisLabel>
                  <AxisGap $grow={1} />
                  <AxisLabel>-0.5034</AxisLabel>
                </Axis>
              </Pane>
              <Pane>
                <Plot>
                  <PlotSvg viewBox="6 314 1821 296" preserveAspectRatio="none">
                    <Grid top={314} bottom={610} />
                    {ATR.map(([color, points]) => (
                      <polyline key={color} points={points} fill="none" stroke={color} strokeWidth="3" />
                    ))}
                  </PlotSvg>
                  <PlotTitle>SPX MA On ATRA(20.8.4) 0.2200 0.2162 0.2072</PlotTitle>
                </Plot>
                <Axis><AxisLabel>1.2988</AxisLabel></Axis>
              </Pane>
              <TimeAxis>
                {TIMES.map(t => <TimeLabel key={t}>{t}</TimeLabel>)}
              </TimeAxis>
            </ChartWindow>
            <ChartTabs>
              {['USDJPY,H1', 'EURUSD,H1'].map(t => (
                <ChartTab key={t} $active={t === chartTab} onClick={() => setChartTab(t)}>{t}</ChartTab>
              ))}
            </ChartTabs>
          </ChartColumn>

          <PointerSvg viewBox="0 0 76 44">
            <path d="M74 3L8 36L9 38Z" fill="#ff3a3a" stroke="#f03236" />
            <path d="M1 40L7 33L11 40Z" fill="#ff3a3a" />
          </PointerSvg>
          <Note>双击指标完成加载</Note>
        </Workspace>

        <StatusBar>
          <StatusHelp>寻求帮助,请按F1键</StatusHelp>
          <StatusCell $width={66}>Default</StatusCell>
          <StatusCell $width={58}>2016.07.04 12:00</StatusCell>
          <StatusCell $width={40}>O: 102.577</StatusCell>
          <StatusCell $width={40}>H: 102.626</StatusCell>
          <StatusCell $width={38}>L: 102.557</StatusCell>
          <StatusCell $width={158}>C: 102.572</StatusCell>
        </StatusBar>
        <PageNumber>5</PageNumber>
        <Watermark>
          <WatermarkName>618外汇网</WatermarkName>
          <WatermarkLink href="#">618waihui.com</WatermarkLink>
        </Watermark>
      </Window>
    </Desktop>
  );
};

export default App;
